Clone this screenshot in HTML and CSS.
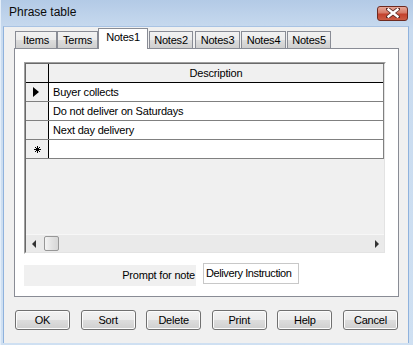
FILE: index.html
```html
<!DOCTYPE html>
<html lang="en">

<head>
    <meta charset="UTF-8">
    <title>Phrase table</title>
    <link rel="stylesheet" href="styles.css">
</head>

<body>
    <div class="window">
        <div class="titlebar">
            <span class="title">Phrase table</span>
            <div class="close">
                <svg width="14" height="10" viewBox="0 0 14 10">
                    <path d="M2 1 L12 9 M12 1 L2 9" stroke="#5a2a24" stroke-width="4" stroke-linecap="square"/>
                    <path d="M2.5 1.5 L11.5 8.5 M11.5 1.5 L2.5 8.5" stroke="#fff" stroke-width="2.4" stroke-linecap="square"/>
                </svg>
            </div>
        </div>
        <div class="client">
            <div class="tabs">
                <div class="tab tab-items">Items</div>
                <div class="tab tab-terms">Terms</div>
                <div class="tab active">Notes1</div>
                <div class="tab">Notes2</div>
                <div class="tab tab-wide">Notes3</div>
                <div class="tab tab-wide">Notes4</div>
                <div class="tab">Notes5</div>
            </div>
            <div class="panel">
                <div class="grid">
                    <div class="grid-inner">
                        <div class="rows">
                            <div class="row head">
                                <div class="sel"></div>
                                <div class="cell">Description</div>
                            </div>
                            <div class="row">
                                <div class="sel"><span class="arrow"></span></div>
                                <div class="cell">Buyer collects</div>
                            </div>
                            <div class="row">
                                <div class="sel"></div>
                                <div class="cell">Do not deliver on Saturdays</div>
                            </div>
                            <div class="row">
                                <div class="sel"></div>
                                <div class="cell">Next day delivery</div>
                            </div>
                            <div class="row">
                                <div class="sel">
                                    <svg width="7" height="7" viewBox="0 0 7 7">
                                        <path d="M3.5 0 V7 M0 3.5 H7 M1 1 L6 6 M6 1 L1 6" stroke="#000" stroke-width="1"/>
                                    </svg>
                                </div>
                                <div class="cell"></div>
                            </div>
                        </div>
                        <div class="empty"></div>
                        <div class="hscroll">
                            <span class="sarrow left"></span>
                            <span class="thumb"></span>
                            <span class="track"></span>
                            <span class="sarrow right"></span>
                        </div>
                    </div>
                </div>
                <div class="prompt">
                    <div class="prompt-label">Prompt for note</div>
                    <div class="prompt-input">Delivery Instruction</div>
                </div>
            </div>
            <div class="buttons">
                <button class="btn">OK</button>
                <button class="btn">Sort</button>
                <button class="btn">Delete</button>
                <button class="btn">Print</button>
                <button class="btn">Help</button>
                <button class="btn">Cancel</button>
            </div>
        </div>
    </div>
</body>

</html>
```

FILE: styles.css
```css
body {
    margin: 0;
    font-family: "Liberation Sans", Arial, sans-serif;
    font-size: 11px;
    letter-spacing: -0.2px;
    color: #000;
}

.window {
    width: 413px;
    height: 345px;
    box-sizing: border-box;
    background: linear-gradient(#b3cae6, #c9dbef 30px, #cfe0f2);
    border-left: 1px solid #e4eef9;
    padding: 0 4px 2px 2px;
    display: flex;
    flex-direction: column;
}

.titlebar {
    height: 26px;
    display: flex;
    align-items: center;
    justify-content: space-between;
    padding-left: 6px;
    flex: none;
}

.title {
    font-size: 12px;
    letter-spacing: 0;
    color: #0b0b0b;
    margin-top: -2px;
}

.close {
    width: 31px;
    height: 15px;
    box-sizing: border-box;
    margin-top: 0;
    margin-right: 1px;
    border: 1px solid #6e2a20;
    border-radius: 3px;
    background: linear-gradient(#e7a899, #d67b68 45%, #c3422d 55%, #cc5d45);
    display: flex;
    align-items: center;
    justify-content: center;
}

.client {
    flex: 1;
    background: #f0f0f0;
    border: 1px solid #8fb2dd;
    border-top-color: #a9c3e3;
    border-bottom: none;
    padding: 0 9px 0 10px;
    display: flex;
    flex-direction: column;
}

/* tabs */
.tabs {
    display: flex;
    align-items: flex-end;
    height: 21px;
    margin-top: 1px;
    margin-bottom: -1px;
    padding-left: 1px;
    position: relative;
    z-index: 1;
}

.tab {
    width: 44px;
    height: 17px;
    box-sizing: border-box;
    margin-bottom: 1px;
    margin-right: 2px;
    border: 1px solid #898c95;
    border-bottom: none;
    background: linear-gradient(#f2f2f2, #ebebeb 50%, #dddddd 51%, #cfcfcf);
    text-align: center;
    line-height: 16px;
}

.tab-items {
    width: 42px;
    margin-right: 0;
}

.tab-terms {
    width: 41px;
    margin-right: 0;
}

.tab-wide {
    width: 45px;
    margin-right: 1px;
}

.tab.active {
    width: 50px;
    height: 21px;
    margin: 0 1px 0 0;
    background: #fff;
    line-height: 17px;
}

.panel {
    width: 385px;
    height: 249px;
    box-sizing: border-box;
    border: 1px solid #898c95;
    background: #fff;
    padding: 13px 9px 0 9px;
}

/* grid */
.grid {
    width: 362px;
    height: 192px;
    box-sizing: border-box;
    border: 1px solid;
    border-color: #a0a0a0 #fff #fff #a0a0a0;
}

.grid-inner {
    height: 100%;
    box-sizing: border-box;
    border: 1px solid;
    border-color: #696969 #e3e3e3 #e3e3e3 #696969;
    background: #f0f0f0;
    display: flex;
    flex-direction: column;
}

.rows {
    width: 358px;
    border-right: 1px solid #808080;
    box-sizing: border-box;
}

.row {
    display: flex;
    height: 19px;
    box-sizing: border-box;
    border-bottom: 1px solid #808080;
}

.row.head {
    border-bottom-color: #000;
}

.sel {
    width: 22px;
    flex: none;
    border-right: 1px solid #000;
    background: #f0f0f0;
    display: flex;
    align-items: center;
    justify-content: center;
}

.cell {
    flex: 1;
    background: #fff;
    padding-left: 4px;
    line-height: 18px;
    white-space: nowrap;
}

.head .cell {
    background: #f0f0f0;
    text-align: center;
    padding-left: 0;
}

.arrow {
    width: 0;
    height: 0;
    margin-left: -2px;
    border-top: 5px solid transparent;
    border-bottom: 5px solid transparent;
    border-left: 6px solid #000;
}

.empty {
    flex: 1;
}

.hscroll {
    height: 17px;
    display: flex;
    align-items: center;
    border-top: 1px solid #f7f7f7;
    background: #eaeaea;
    padding: 0 5px 0 6px;
}

.sarrow {
    width: 0;
    height: 0;
    border-top: 4px solid transparent;
    border-bottom: 4px solid transparent;
}

.sarrow.left {
    border-right: 4px solid #333;
}

.sarrow.right {
    border-left: 4px solid #333;
}

.thumb {
    width: 15px;
    height: 15px;
    box-sizing: border-box;
    margin-left: 8px;
    border: 1px solid #979797;
    border-radius: 2px;
    background: linear-gradient(90deg, #f4f4f4, #e3e3e3 50%, #d6d6d6);
}

.track {
    flex: 1;
}

/* prompt */
.prompt {
    display: flex;
    align-items: flex-start;
    margin-top: 9px;
}

.prompt-label {
    width: 172px;
    height: 21px;
    margin-top: 2px;
    background: #f0f0f0;
    text-align: right;
    line-height: 21px;
    padding-right: 1px;
    box-sizing: border-box;
}

.prompt-input {
    width: 96px;
    height: 21px;
    box-sizing: border-box;
    margin-left: 7px;
    border: 1px solid #c8c8c8;
    background: #fff;
    padding-left: 2px;
    line-height: 19px;
    letter-spacing: -0.4px;
    overflow: hidden;
    white-space: nowrap;
}

/* buttons */
.buttons {
    display: flex;
    justify-content: space-between;
    width: 383px;
    margin-top: 13px;
    margin-left: 1px;
}

.btn {
    width: 55px;
    height: 20px;
    padding: 0;
    font-family: "Liberation Sans", Arial, sans-serif;
    font-size: 11px;
    letter-spacing: -0.2px;
    color: #000;
    border: 1px solid #707070;
    border-radius: 3px;
    background: linear-gradient(#f2f2f2, #ebebeb 50%, #dddddd 51%, #cfcfcf);
    box-shadow: inset 0 0 0 1px #fcfcfc;
}
```
